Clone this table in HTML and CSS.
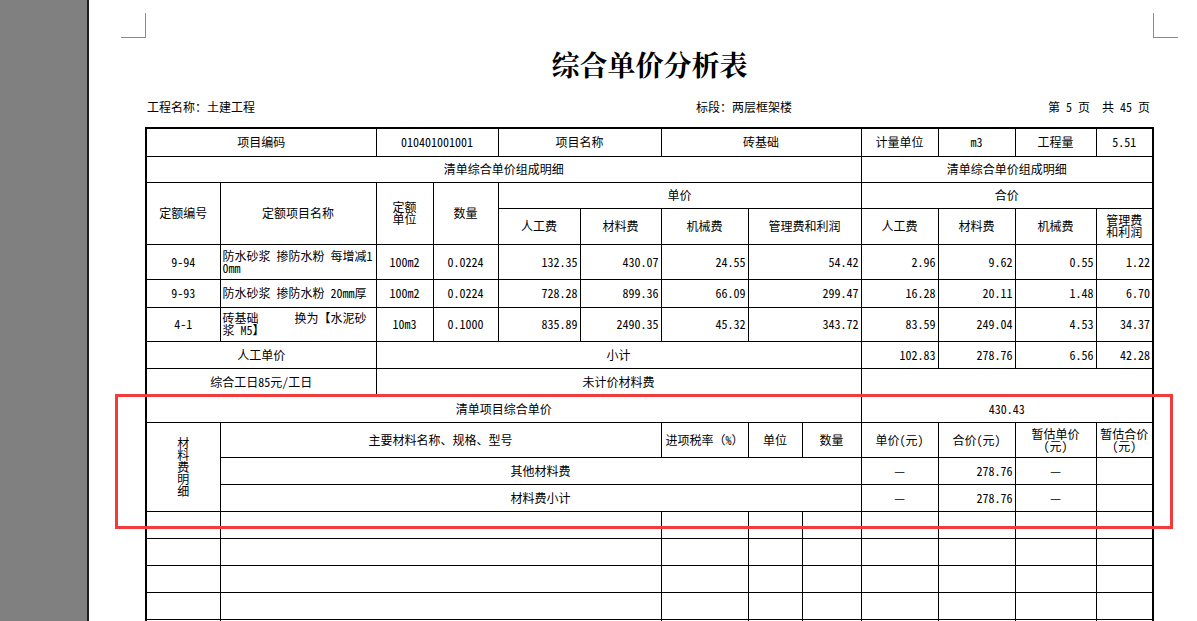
FILE: index.html
```html
<!DOCTYPE html>
<html lang="zh-CN">
<head>
<meta charset="utf-8">
<title>综合单价分析表</title>
<link rel="stylesheet" href="styles.css">
</head>
<body>
<div class="gutter"></div>
<div class="page">
  <div class="marks">
    <div class="mark mark-l"></div>
    <div class="mark mark-r"></div>
  </div>
  <div class="sheet">
    <h1 class="title">综合单价分析表</h1>
    <div class="info">
      <span>工程名称：土建工程</span>
      <span>标段：两层框架楼</span>
      <span>第 5 页&nbsp;&nbsp;共 45 页</span>
    </div>
    <div class="frame">
      <table class="grid">
        <colgroup>
          <col class="w73"><col class="w156"><col class="w57"><col class="w65"><col class="w82"><col class="w81"><col class="w87"><col class="w54"><col class="w59"><col class="w77"><col class="w77"><col class="w81"><col class="w56">
        </colgroup>
        <tbody>
          <tr class="r27">
            <td colspan="2">项目编码</td>
            <td colspan="2">010401001001</td>
            <td colspan="2">项目名称</td>
            <td colspan="3">砖基础</td>
            <td>计量单位</td>
            <td>m3</td>
            <td>工程量</td>
            <td>5.51</td>
          </tr>
          <tr class="r26">
            <td colspan="9">清单综合单价组成明细</td>
            <td colspan="4">清单综合单价组成明细</td>
          </tr>
          <tr class="r26">
            <td rowspan="2">定额编号</td>
            <td rowspan="2">定额项目名称</td>
            <td rowspan="2" class="tight">定额<br>单位</td>
            <td rowspan="2">数量</td>
            <td colspan="5">单价</td>
            <td colspan="4">合价</td>
          </tr>
          <tr class="r36">
            <td>人工费</td>
            <td>材料费</td>
            <td>机械费</td>
            <td colspan="2">管理费和利润</td>
            <td>人工费</td>
            <td>材料费</td>
            <td>机械费</td>
            <td class="tight">管理费<br>和利润</td>
          </tr>
          <tr class="r35">
            <td>9-94</td>
            <td class="name">防水砂浆 掺防水粉 每增减1<br>0mm</td>
            <td>100m2</td>
            <td>0.0224</td>
            <td class="num">132.35</td>
            <td class="num">430.07</td>
            <td class="num">24.55</td>
            <td colspan="2" class="num">54.42</td>
            <td class="num">2.96</td>
            <td class="num">9.62</td>
            <td class="num">0.55</td>
            <td class="num">1.22</td>
          </tr>
          <tr class="r28">
            <td>9-93</td>
            <td class="name">防水砂浆 掺防水粉 20mm厚</td>
            <td>100m2</td>
            <td>0.0224</td>
            <td class="num">728.28</td>
            <td class="num">899.36</td>
            <td class="num">66.09</td>
            <td colspan="2" class="num">299.47</td>
            <td class="num">16.28</td>
            <td class="num">20.11</td>
            <td class="num">1.48</td>
            <td class="num">6.70</td>
          </tr>
          <tr class="r34">
            <td>4-1</td>
            <td class="name pre">砖基础      换为【水泥砂<br>浆 M5】</td>
            <td>10m3</td>
            <td>0.1000</td>
            <td class="num">835.89</td>
            <td class="num">2490.35</td>
            <td class="num">45.32</td>
            <td colspan="2" class="num">343.72</td>
            <td class="num">83.59</td>
            <td class="num">249.04</td>
            <td class="num">4.53</td>
            <td class="num">34.37</td>
          </tr>
          <tr class="r27">
            <td colspan="2">人工单价</td>
            <td colspan="7">小计</td>
            <td class="num">102.83</td>
            <td class="num">278.76</td>
            <td class="num">6.56</td>
            <td class="num">42.28</td>
          </tr>
          <tr class="r27">
            <td colspan="2">综合工日85元/工日</td>
            <td colspan="7">未计价材料费</td>
            <td colspan="4"></td>
          </tr>
          <tr class="r27">
            <td colspan="9">清单项目综合单价</td>
            <td colspan="4">430.43</td>
          </tr>
          <tr class="r35">
            <td rowspan="3"><span class="vert">材料费明细</span></td>
            <td colspan="5">主要材料名称、规格、型号</td>
            <td>进项税率（%）</td>
            <td>单位</td>
            <td>数量</td>
            <td>单价(元)</td>
            <td>合价(元)</td>
            <td class="tight">暂估单价<br>(元)</td>
            <td class="tight">暂估合价<br>(元)</td>
          </tr>
          <tr class="r27">
            <td colspan="8">其他材料费</td>
            <td>—</td>
            <td class="num">278.76</td>
            <td>—</td>
            <td></td>
          </tr>
          <tr class="r27">
            <td colspan="8">材料费小计</td>
            <td>—</td>
            <td class="num">278.76</td>
            <td>—</td>
            <td></td>
          </tr>
          <tr class="r27"><td></td><td colspan="5"></td><td></td><td></td><td></td><td></td><td></td><td></td><td></td></tr>
          <tr class="r27"><td></td><td colspan="5"></td><td></td><td></td><td></td><td></td><td></td><td></td><td></td></tr>
          <tr class="r27"><td></td><td colspan="5"></td><td></td><td></td><td></td><td></td><td></td><td></td><td></td></tr>
          <tr class="r27"><td></td><td colspan="5"></td><td></td><td></td><td></td><td></td><td></td><td></td><td></td></tr>
          <tr class="r27"><td></td><td colspan="5"></td><td></td><td></td><td></td><td></td><td></td><td></td><td></td></tr>
        </tbody>
      </table>
    </div>
  </div>
</div>
<div class="annot"></div>
</body>
</html>
```

FILE: styles.css
```css
html, body {
  margin: 0;
  padding: 0;
}
body {
  display: flex;
  height: 621px;
  overflow: hidden;
  background: #ffffff;
  font-family: "Noto Sans Mono CJK SC", "Noto Sans CJK SC", "Liberation Mono", monospace;
  font-size: 12px;
  color: #000;
  position: relative;
}
.gutter {
  flex: none;
  width: 87px;
  background: #808080;
  border-right: 2px solid #1e1e1e;
}
.page {
  flex: 1;
  min-width: 0;
}
.marks {
  display: flex;
  justify-content: space-between;
  padding: 13px 19px 0 32px;
}
.mark {
  box-sizing: border-box;
  width: 25px;
  height: 25px;
  border-bottom: 1px solid #8a8a8a;
}
.mark-l { border-right: 1px solid #8a8a8a; }
.mark-r { border-left: 1px solid #8a8a8a; }

.sheet {
  margin-left: 56px;
  width: 1009px;
}
.title {
  margin: 12px 0 0;
  height: 28px;
  line-height: 28px;
  text-align: center;
  font-family: "Noto Serif CJK SC", "Noto Sans CJK SC", serif;
  font-size: 28px;
  font-weight: 700;
}
.info {
  margin-top: 22px;
  height: 14px;
  line-height: 14px;
  display: grid;
  grid-template-columns: 549px 1fr auto;
  padding: 0 4px 0 2px;
  white-space: nowrap;
}
.frame {
  margin-top: 13px;
  border: 2px solid #000;
  border-bottom: none;
}
.grid {
  width: 1005px;
  table-layout: fixed;
  border-collapse: collapse;
  border-style: hidden;
}
.grid td {
  border: 1px solid #000;
  padding: 0 2px;
  text-align: center;
  vertical-align: middle;
  line-height: 12px;
  white-space: nowrap;
  overflow: visible;
}
.grid td.num { text-align: right; padding-right: 2px; }
.grid td.name { text-align: left; padding-left: 2px; }
.grid td.pre { white-space: pre; }
.grid td.tight { line-height: 12px; }
.vert {
  display: block;
  width: 12px;
  margin: 0 auto;
  white-space: normal;
  line-height: 12px;
}

.w73 { width: 73px; }
.w156 { width: 156px; }
.w57 { width: 57px; }
.w65 { width: 65px; }
.w82 { width: 82px; }
.w81 { width: 81px; }
.w87 { width: 87px; }
.w54 { width: 54px; }
.w59 { width: 59px; }
.w77 { width: 77px; }
.w56 { width: 56px; }

.r26 { height: 26px; }
.r27 { height: 27px; }
.r28 { height: 28px; }
.r34 { height: 34px; }
.r35 { height: 35px; }
.r36 { height: 36px; }

.annot {
  position: absolute;
  left: 115px;
  top: 394px;
  width: 1058px;
  height: 135px;
  box-sizing: border-box;
  border: 3px solid #f23c3c;
  pointer-events: none;
}
```
